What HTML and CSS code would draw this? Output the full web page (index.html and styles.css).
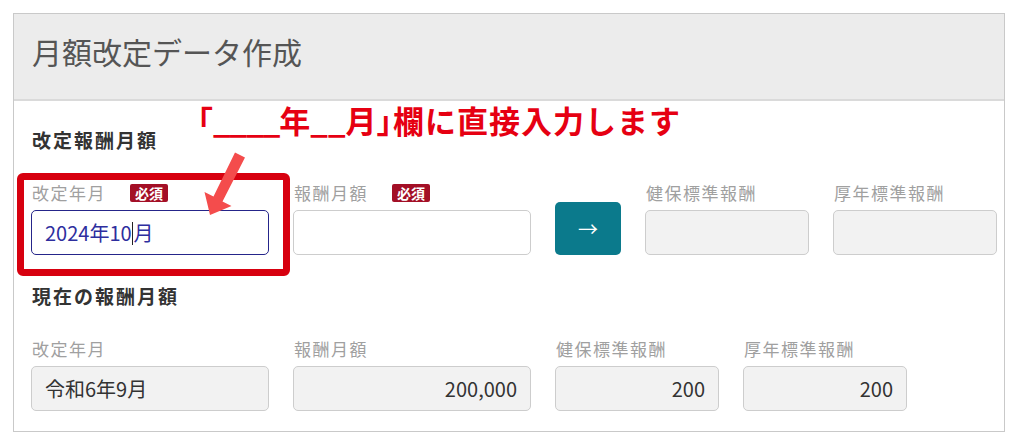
FILE: index.html
```html
<!DOCTYPE html>
<html>

<head>
    <meta charset="UTF-8">
    <meta name="viewport" content="width=device-width, initial-scale=1.0">
    <title>月額改定データ作成</title>
    <link rel="stylesheet" href="styles.css">
</head>

<body>

    <div class="page">

        <div class="card">
            <div class="card-head">月額改定データ作成</div>

            <div class="card-body">

                <h3 class="sec-title">改定報酬月額</h3>
                <div class="row">
                    <div class="field wide">
                        <p class="label">改定年月<span class="must">必須</span></p>
                        <div class="box focus">2024年10<span class="caret"></span>月</div>
                    </div>
                    <div class="field wide">
                        <p class="label">報酬月額<span class="must">必須</span></p>
                        <div class="box"></div>
                    </div>
                    <div class="btn">→</div>
                    <div class="field narrow">
                        <p class="label">健保標準報酬</p>
                        <div class="box ro"></div>
                    </div>
                    <div class="field narrow">
                        <p class="label">厚年標準報酬</p>
                        <div class="box ro"></div>
                    </div>
                </div>

                <h3 class="sec-title second">現在の報酬月額</h3>
                <div class="row">
                    <div class="field wide">
                        <p class="label">改定年月</p>
                        <div class="box ro">令和6年9月</div>
                    </div>
                    <div class="field wide">
                        <p class="label">報酬月額</p>
                        <div class="box ro num">200,000</div>
                    </div>
                    <div class="field narrow">
                        <p class="label">健保標準報酬</p>
                        <div class="box ro num">200</div>
                    </div>
                    <div class="field narrow">
                        <p class="label">厚年標準報酬</p>
                        <div class="box ro num">200</div>
                    </div>
                </div>

            </div>
        </div>

        <!-- 注釈 -->
        <div class="note">「<span class="blank">____</span>年<span class="blank short">__</span>月<span class="close">」</span><span class="tail">欄に直接入力します</span></div>
        <div class="mark"></div>
        <svg class="arrow" width="60" height="80" viewBox="190 150 60 80">
            <polygon points="245,157.5 235,152.5 213.5,196.5 204.5,192 210,215 231.5,206 222.5,201.5" fill="#f44c4c" />
        </svg>

    </div>

</body>

</html>
```

FILE: styles.css
```css
* {
    margin: 0;
    padding: 0;
    box-sizing: border-box;
}

body {
    font-family: "Noto Sans CJK JP", "Noto Sans", sans-serif;
    background: #fff;
}

.page {
    position: relative;
    width: 1015px;
    height: 444px;
    padding: 13px;
}

.card {
    width: 992px;
    border: 1px solid #c9c9c9;
}

.card-head {
    height: 87px;
    padding: 17px 18px 0;
    font-size: 30px;
    line-height: 40px;
    color: #555;
    background-color: #ececec;
    border-bottom: 2px solid #dadada;
}

.card-body {
    padding: 25px 0 20px 17px;
}

.sec-title {
    font-size: 19px;
    line-height: 28px;
    font-weight: bold;
    color: #333;
    letter-spacing: 2px;
    padding-left: 1px;
    margin-bottom: 27px;
}

.sec-title.second {
    margin-top: 27px;
}

.row {
    display: flex;
    align-items: flex-end;
    gap: 24px;
}

.field.wide {
    width: 238px;
}

.field.narrow {
    width: 164px;
}

.label {
    font-size: 17px;
    line-height: 24px;
    color: #a0a0a0;
    letter-spacing: 1.5px;
    padding-left: 1px;
    margin-bottom: 5px;
    display: flex;
    align-items: center;
}

.must {
    margin-left: 24px;
    width: 38px;
    height: 18px;
    line-height: 18px;
    text-align: center;
    font-size: 14px;
    font-weight: bold;
    letter-spacing: 0;
    color: #fff;
    background-color: #a30f26;
    border-radius: 2px;
}

.box {
    height: 45px;
    padding: 0 13px;
    font-size: 20px;
    line-height: 43px;
    color: #333;
    border: 1px solid #cdcdcd;
    border-radius: 5px;
    background-color: #fff;
}

.box.ro {
    background-color: #f2f2f2;
}

.box.num {
    text-align: right;
}

.box.focus {
    color: #2e2e9e;
    border: 1.5px solid #25258a;
}

.caret {
    display: inline-block;
    width: 1px;
    height: 23px;
    margin: 0 1px 0 0;
    vertical-align: -4px;
    background-color: #222;
}

.btn {
    width: 66px;
    height: 53px;
    line-height: 53px;
    text-align: center;
    font-size: 20px;
    color: #fff;
    background-color: #0b7a8c;
    border-radius: 5px;
}

.note {
    position: absolute;
    left: 182px;
    top: 100px;
    font-size: 31px;
    line-height: 40px;
    font-weight: bold;
    color: #e60012;
    white-space: nowrap;
}

.blank {
    letter-spacing: -1px;
}

.blank.short {
    letter-spacing: 0;
}

.close {
    font-feature-settings: "halt";
    margin-right: 1px;
}

.tail {
    letter-spacing: 1px;
}

.mark {
    position: absolute;
    left: 17px;
    top: 173px;
    width: 273px;
    height: 103px;
    border: 7px solid #d7000f;
    border-radius: 6px;
}

.arrow {
    position: absolute;
    left: 190px;
    top: 150px;
}
```
